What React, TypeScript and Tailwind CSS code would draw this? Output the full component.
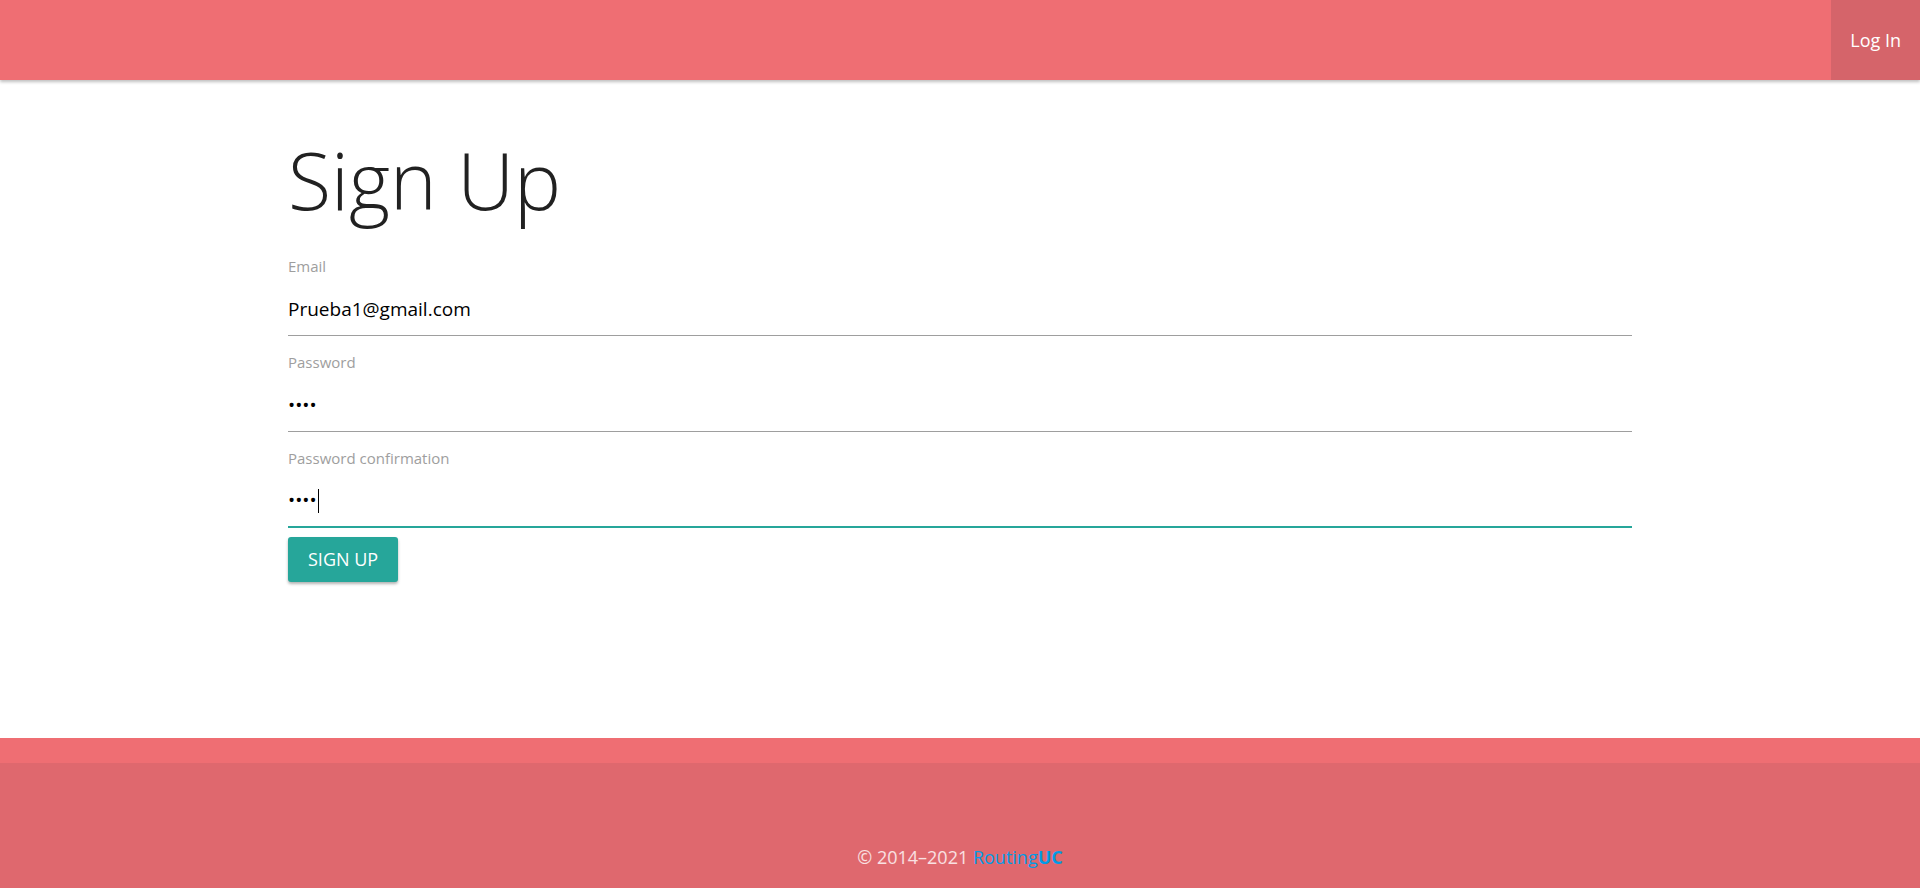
import React from "react";

const font = {fontFamily: "'Open Sans', 'Noto Sans', sans-serif"};

function Field({
  label,
  value,
  focused,
}: {
  label: string;
  value: string;
  focused?: boolean;
}) {
  return (
    <div className="flex flex-col">
      <label className="text-[15px] leading-[18px] text-[#9e9e9e]">
        {label}
      </label>
      <div
        className={
          focused
            ? "mt-[15px] flex h-[46px] items-center border-b-2 border-[#26a69a] pb-[7px] text-[19px] text-black"
            : "mt-[15px] flex h-[46px] items-center border-b border-[#9e9e9e] pb-[7px] text-[19px] text-black"
        }
      >
        <span>{value}</span>
        {focused && (
          <span className="ml-[1px] h-[24px] w-[1px] bg-black" />
        )}
      </div>
    </div>
  );
}

export default function App() {
  return (
    <div
      className="flex min-h-screen flex-col bg-white"
      style={font}
    >
      <nav className="relative z-10 flex h-[80px] justify-end bg-[#ef6e73] shadow-[0_2px_3px_rgba(0,0,0,0.25)]">
        <a className="flex items-center bg-[#d5646a] px-[19px] text-[18px] text-white">
          Log In
        </a>
      </nav>

      <main className="flex-1">
        <div className="mx-auto w-[70%]">
          <h1 className="mt-[40px] text-[79px] font-light leading-[120px] text-[#212121]">
            Sign Up
          </h1>

          <div className="mt-[17px] flex flex-col gap-[17px]">
            <Field label="Email" value="Prueba1@gmail.com" />
            <Field label="Password" value="••••" />
            <Field
              label="Password confirmation"
              value="••••"
              focused
            />
          </div>

          <button className="mt-[9px] h-[45px] rounded-[3px] bg-[#26a69a] px-[20px] text-[18px] uppercase text-white shadow-[0_2px_3px_rgba(0,0,0,0.3)]">
            Sign up
          </button>
        </div>
      </main>

      <footer className="flex h-[150px] flex-col bg-[#ef6e73]">
        <div className="h-[25px]" />
        <div className="flex flex-1 justify-center bg-[#df686e] pt-[82px] text-[18px] leading-[24px] text-white/80">
          <span>
            © 2014–2021{" "}
            <a className="text-[#039be5]">
              Routing<b>UC</b>
            </a>
          </span>
        </div>
      </footer>
    </div>
  );
}
